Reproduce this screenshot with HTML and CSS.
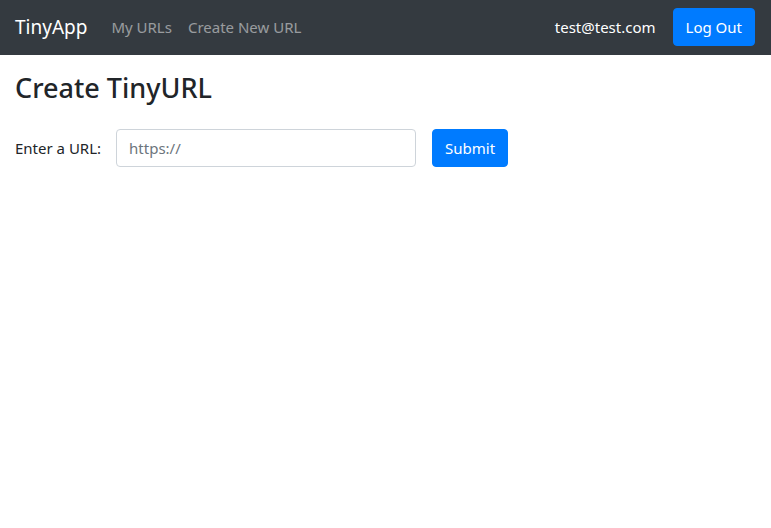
FILE: index.html
```html
<!DOCTYPE html>
<html lang="en">
<head>
<meta charset="utf-8">
<title>TinyApp</title>
<link rel="stylesheet" href="styles.css">
</head>
<body>
<nav class="navbar">
  <div class="nav-left">
    <a class="brand" href="#">TinyApp</a>
    <a class="nav-link" href="#">My URLs</a>
    <a class="nav-link" href="#">Create New URL</a>
  </div>
  <div class="nav-right">
    <span class="user">test@test.com</span>
    <button class="btn btn-primary">Log Out</button>
  </div>
</nav>
<main class="container">
  <h1 class="title">Create TinyURL</h1>
  <form class="url-form">
    <label class="label" for="longURL">Enter a URL:</label>
    <input class="input" id="longURL" type="text" placeholder="https://">
    <button class="btn btn-primary" type="button">Submit</button>
  </form>
</main>
</body>
</html>
```
FILE: styles.css
```css
* { box-sizing: border-box; }
body {
  margin: 0;
  font-family: "Segoe UI", "Noto Sans", sans-serif;
  font-size: 15px;
  line-height: 24px;
  color: #212529;
  background: #fff;
}
a { text-decoration: none; }
.navbar {
  background: #343a40;
  height: 55px;
  padding: 0 16px 1px 15px;
  display: flex;
  align-items: center;
  justify-content: space-between;
}
.nav-left, .nav-right { display: flex; align-items: center; }
.brand {
  color: #fff;
  font-size: 19px;
  margin-right: 16px;
  line-height: 30px;
}
.nav-link {
  color: rgba(255,255,255,.5);
  padding: 8px;
}
.user {
  color: #fff;
  margin-right: 17px;
}
.btn {
  font-family: inherit;
  font-size: 15px;
  line-height: 24px;
  padding: 6px 12px;
  border: 1px solid transparent;
  border-radius: 4px;
  cursor: pointer;
}
.btn-primary {
  background: #007bff;
  border-color: #007bff;
  color: #fff;
}
.container { padding: 0 15px; }
.title {
  font-size: 27px;
  font-weight: 500;
  line-height: 1.2;
  margin: 17px 0 25px;
}
.url-form { display: flex; align-items: center; }
.label { margin-right: 15px; }
.input {
  width: 300px;
  height: 38px;
  padding: 6px 12px;
  font-family: inherit;
  font-size: 15px;
  color: #495057;
  border: 1px solid #ced4da;
  border-radius: 4px;
  margin-right: 16px;
}
.input::placeholder { color: #6c757d; }
```
